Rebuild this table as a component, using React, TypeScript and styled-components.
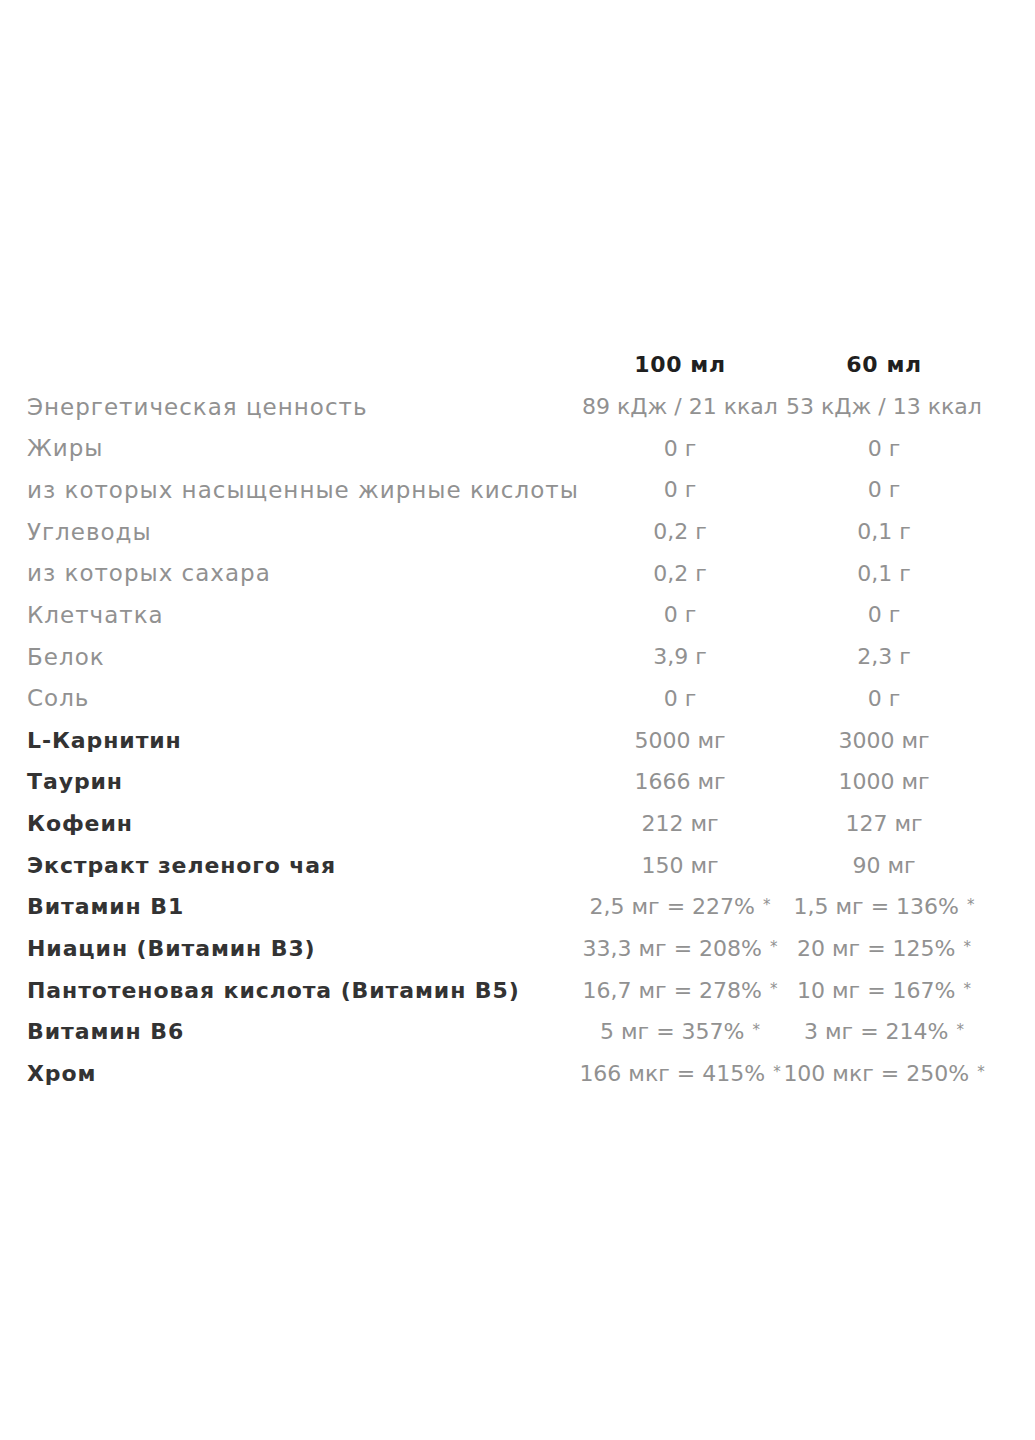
import styled, { createGlobalStyle } from "styled-components";

const GlobalStyle = createGlobalStyle`
  html, body {
    margin: 0;
    padding: 0;
    background: #ffffff;
  }
  body {
    font-family: "DejaVu Sans", "Noto Sans", sans-serif;
  }
`;

const Page = styled.div`
  width: 1035px;
  min-height: 1440px;
  padding: 344px 0 0 27px;
  box-sizing: border-box;
`;

const Table = styled.div`
  display: grid;
  grid-template-columns: 551px 204px 204px;
  grid-auto-rows: 41.7px;
  align-items: center;
  font-size: 22px;
`;

const Cell = styled.div<{ $bold?: boolean; $center?: boolean }>`
  white-space: nowrap;
  text-align: ${(p) => (p.$center ? "center" : "left")};
  color: ${(p) => (p.$bold ? "#333333" : "#919191")};
  font-weight: ${(p) => (p.$bold ? 700 : 400)};
  font-size: ${(p) => (p.$bold || p.$center ? "22px" : "23px")};
  letter-spacing: ${(p) => (p.$bold ? "0.9px" : p.$center ? "0px" : "1px")};
`;

const Head = styled(Cell)`
  color: #1f1f1f;
  font-weight: 700;
  font-size: 22px;
  text-align: center;
  letter-spacing: 0.6px;
`;

const Star = styled.span`
  font-size: 15px;
  vertical-align: 4px;
  margin-left: 1px;
`;

type Row = { name: string; a: string; b: string; bold?: boolean };

const rows: Row[] = [
  { name: "Энергетическая ценность", a: "89 кДж / 21 ккал", b: "53 кДж / 13 ккал" },
  { name: "Жиры", a: "0 г", b: "0 г" },
  { name: "из которых насыщенные жирные кислоты", a: "0 г", b: "0 г" },
  { name: "Углеводы", a: "0,2 г", b: "0,1 г" },
  { name: "из которых сахара", a: "0,2 г", b: "0,1 г" },
  { name: "Клетчатка", a: "0 г", b: "0 г" },
  { name: "Белок", a: "3,9 г", b: "2,3 г" },
  { name: "Соль", a: "0 г", b: "0 г" },
  { name: "L-Карнитин", a: "5000 мг", b: "3000 мг", bold: true },
  { name: "Таурин", a: "1666 мг", b: "1000 мг", bold: true },
  { name: "Кофеин", a: "212 мг", b: "127 мг", bold: true },
  { name: "Экстракт зеленого чая", a: "150 мг", b: "90 мг", bold: true },
  { name: "Витамин B1", a: "2,5 мг = 227% *", b: "1,5 мг = 136% *", bold: true },
  { name: "Ниацин (Витамин B3)", a: "33,3 мг = 208% *", b: "20 мг = 125% *", bold: true },
  { name: "Пантотеновая кислота (Витамин B5)", a: "16,7 мг = 278% *", b: "10 мг = 167% *", bold: true },
  { name: "Витамин B6", a: "5 мг = 357% *", b: "3 мг = 214% *", bold: true },
  { name: "Хром", a: "166 мкг = 415% *", b: "100 мкг = 250% *", bold: true },
];

function Value({ text }: { text: string }) {
  if (text.endsWith(" *")) {
    return (
      <Cell $center>
        {text.slice(0, -1)}
        <Star>*</Star>
      </Cell>
    );
  }
  return <Cell $center>{text}</Cell>;
}

export default function App() {
  return (
    <Page>
      <GlobalStyle />
      <Table>
        <Cell />
        <Head>100 мл</Head>
        <Head>60 мл</Head>
        {rows.map((r) => (
          <>
            <Cell key={r.name} $bold={r.bold}>{r.name}</Cell>
            <Value text={r.a} />
            <Value text={r.b} />
          </>
        ))}
      </Table>
    </Page>
  );
}
